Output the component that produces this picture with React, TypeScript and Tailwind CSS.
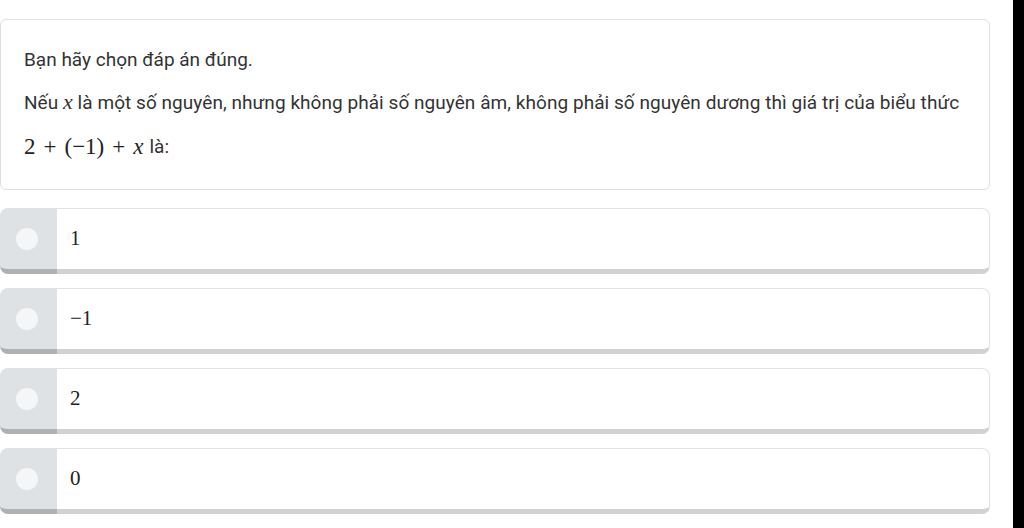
import React from "react";

const sans = { fontFamily: "Roboto, 'Noto Sans', Arial, sans-serif" };
const libSerif = { fontFamily: "'Liberation Serif', serif" };

function Option({ children }: { children: React.ReactNode }) {
  return (
    <div className="flex h-[66px] w-full">
      <div className="flex w-[57px] items-center rounded-l-[8px] border-b-[5px] border-b-[#aeb0b2] bg-[#dfe2e5] pl-[16px]">
        <div className="h-[22px] w-[22px] rounded-full bg-[#f4f6f7]" />
      </div>
      <div className="flex flex-1 items-center rounded-r-[8px] border border-l-0 border-[#e2e2e2] border-b-[5px] border-b-[#d2d2d2] bg-white pl-[13px] text-[21px] text-[#222]" style={libSerif}>
        {children}
      </div>
    </div>
  );
}

export default function App() {
  return (
    <div className="flex h-[528px] w-[1024px] overflow-hidden bg-white">
      <div className="flex w-[1013px] flex-col gap-[14px] pr-[23px] pt-[19px]">
        <div className="mb-[4px] flex h-[171px] flex-col rounded-[6px] border border-[#e0e0e0] bg-white pl-[23px] pt-[28px] text-[19px] text-[#333]" style={sans}>
          <div className="leading-[24px]">Bạn hãy chọn đáp án đúng.</div>
          <div className="mt-[18px] leading-[24px] tracking-[0.05px]">
            Nếu <span className="italic text-[22px]" style={libSerif}>x</span> là một số nguyên, nhưng không phải số nguyên âm, không phải số nguyên dương thì giá trị của biểu thức
          </div>
          <div className="mt-[18px] flex items-center leading-[28px]">
            <span className="flex items-center text-[23px] text-[#222]" style={libSerif}>
              <span>2</span>
              <span className="mx-[8px]">+</span>
              <span>(−1)</span>
              <span className="mx-[8px]">+</span>
              <span className="italic">x</span>
            </span>
            <span className="ml-[6px]">là:</span>
          </div>
        </div>
        <Option>1</Option>
        <Option>−1</Option>
        <Option>2</Option>
        <Option>0</Option>
      </div>
      <div className="w-[11px] bg-black" />
    </div>
  );
}
